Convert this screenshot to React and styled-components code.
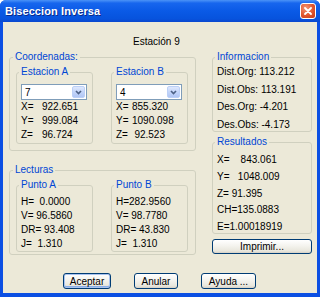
import React from "react";
import styled, { createGlobalStyle } from "styled-components";

const GlobalStyle = createGlobalStyle`
  html, body {
    margin: 0;
    padding: 0;
    background: #ffffff;
  }
  body {
    font-family: "Liberation Sans Narrow", "Liberation Sans", Arial, sans-serif;
    font-size: 10px;
    color: #000;
  }
`;

// Window frame
const Window = styled.div`
  width: 320px;
  height: 297px;
  box-sizing: border-box;
  display: flex;
  flex-direction: column;
  background: #0b4fe3;
  border-radius: 6px 6px 0 0;
  padding: 0 3px 4px;
  overflow: hidden;
`;

const TitleBar = styled.div`
  height: 22px;
  margin: 0 -3px;
  padding: 0 4px 0 5px;
  display: flex;
  align-items: center;
  justify-content: space-between;
  background: linear-gradient(
    180deg,
    #4b93f7 0%,
    #1766ee 14%,
    #0a5ae6 50%,
    #0753dd 85%,
    #0a47cf 100%
  );
`;

const Title = styled.span`
  color: #fff;
  font-weight: bold;
  font-size: 11px;
  text-shadow: 1px 1px 0 #0b2a8a;
  letter-spacing: 0.1px;
`;

const CloseButton = styled.div`
  width: 14px;
  height: 14px;
  border: 1px solid #fff;
  border-radius: 3px;
  background: radial-gradient(circle at 35% 30%, #f29676 0%, #e0552e 55%, #c23a17 100%);
  display: flex;
  align-items: center;
  justify-content: center;
`;

const Body = styled.div`
  flex: 1;
  background: #ece9d8;
  display: flex;
  flex-direction: column;
  padding: 14px 5px 0 6px;
`;

const Caption = styled.div`
  line-height: 12px;
  padding-left: 124px;
`;

const Main = styled.div`
  display: grid;
  grid-template-columns: 187px 100px;
  column-gap: 16px;
  margin-top: 3px;
  align-items: start;
`;

const Column = styled.div`
  display: flex;
  flex-direction: column;
  gap: ${(p) => p.gap}px;
`;

// Group boxes
const Group = styled.fieldset`
  margin: 0;
  padding: 0;
  min-width: 0;
  box-sizing: border-box;
  width: ${(p) => (p.width ? `${p.width}px` : "auto")};
  height: ${(p) => p.height}px;
  border: 1px solid #d0d0bf;
  border-radius: 3px;
`;

const Legend = styled.legend`
  margin-left: ${(p) => p.offset || 2}px;
  padding: 0 2px;
  color: #0046d5;
  line-height: 12px;
`;

const GroupRow = styled.div`
  display: flex;
  gap: 18px;
  padding: 3px 0 0 6px;
`;

const GroupContent = styled.div`
  display: flex;
  flex-direction: column;
  gap: ${(p) => p.gap || 0}px;
  padding: ${(p) => p.top}px 0 0 4px;
`;

const Line = styled.div`
  line-height: ${(p) => p.lh || 12}px;
  white-space: pre;
`;

const ValueRow = styled.div`
  display: flex;
  width: ${(p) => p.width}px;
  line-height: 14px;
  white-space: pre;
`;

const Key = styled.span`
  width: ${(p) => p.width}px;
  flex: none;
`;

const Value = styled.span`
  flex: 1;
  text-align: ${(p) => p.align};
`;

// Combo box
const Combo = styled.div`
  width: 66px;
  height: 16px;
  box-sizing: border-box;
  border: 1px solid #7f9db9;
  background: #fff;
  display: flex;
  align-items: center;
  justify-content: space-between;
  padding: 1px 1px 1px 3px;
`;

const ComboArrow = styled.span`
  width: 13px;
  height: 12px;
  box-sizing: border-box;
  border: 1px solid #bcd0f7;
  border-radius: 2px;
  background: linear-gradient(180deg, #dfe8fd 0%, #c3d5fa 50%, #b1c6f4 100%);
  display: flex;
  align-items: center;
  justify-content: center;
`;

// Buttons
const Button = styled.button`
  box-sizing: border-box;
  width: ${(p) => p.width}px;
  height: ${(p) => p.height || 16}px;
  margin-top: ${(p) => p.offsetTop || 0}px;
  padding: 0;
  font-family: inherit;
  font-size: 10px;
  color: #000;
  border: 1px solid #003c74;
  border-radius: 3px;
  background: linear-gradient(180deg, #ffffff 0%, #f4f3ee 45%, #e8e6dc 85%, #d6d0c5 100%);
  box-shadow: ${(p) =>
    p.primary ? "inset 0 0 0 1px #a9c3ef, inset 0 -1px 0 1px #8aaee8" : "none"};
`;

const ButtonRow = styled.div`
  display: flex;
  gap: 23px;
  padding-left: 54px;
  margin-top: 18px;
`;

const Chevron = () => (
  <svg width="7" height="5" viewBox="0 0 7 5">
    <path d="M1 1 L3.5 3.6 L6 1" fill="none" stroke="#4d6185" strokeWidth="1.6" />
  </svg>
);

const CloseIcon = () => (
  <svg width="8" height="8" viewBox="0 0 8 8">
    <path d="M1 1 L7 7 M7 1 L1 7" stroke="#fff" strokeWidth="1.8" strokeLinecap="round" />
  </svg>
);

const StationBox = ({ title, selected, rows, valueAlign, keyWidth, rowWidth }) => (
  <Group width={77} height={78}>
    <Legend>{title}</Legend>
    <GroupContent top={6}>
      <Combo>
        <span>{selected}</span>
        <ComboArrow>
          <Chevron />
        </ComboArrow>
      </Combo>
      {rows.map(([k, v]) => (
        <ValueRow key={k} width={rowWidth}>
          <Key width={keyWidth}>{k}</Key>
          <Value align={valueAlign}>{v}</Value>
        </ValueRow>
      ))}
    </GroupContent>
  </Group>
);

const PointBox = ({ title, lines }) => (
  <Group width={77} height={73}>
    <Legend>{title}</Legend>
    <GroupContent top={4}>
      {lines.map((l) => (
        <Line key={l} lh={14}>
          {l}
        </Line>
      ))}
    </GroupContent>
  </Group>
);

const App = () => {
  return (
    <>
      <GlobalStyle />
      <Window>
        <TitleBar>
          <Title>Biseccion Inversa</Title>
          <CloseButton>
            <CloseIcon />
          </CloseButton>
        </TitleBar>
        <Body>
          <Caption>Estación 9</Caption>
          <Main>
            <Column gap={13}>
              <Group height={100}>
                <Legend offset={3}>Coordenadas:</Legend>
                <GroupRow>
                  <StationBox
                    title="Estacion A"
                    selected="7"
                    keyWidth={21}
                    rowWidth={60}
                    valueAlign="left"
                    rows={[
                      ["X=", "922.651"],
                      ["Y=", "999.084"],
                      ["Z=", "96.724"],
                    ]}
                  />
                  <StationBox
                    title="Estacion B"
                    selected="4"
                    keyWidth={16}
                    rowWidth={49}
                    valueAlign="right"
                    rows={[
                      ["X=", "855.320"],
                      ["Y=", "1090.098"],
                      ["Z=", "92.523"],
                    ]}
                  />
                </GroupRow>
              </Group>
              <Group height={91}>
                <Legend offset={3}>Lecturas</Legend>
                <GroupRow>
                  <PointBox
                    title="Punto A"
                    lines={["H=  0.0000", "V= 96.5860", "DR= 93.408", "J=  1.310"]}
                  />
                  <PointBox
                    title="Punto B"
                    lines={["H=282.9560", "V= 98.7780", "DR= 43.830", "J=  1.310"]}
                  />
                </GroupRow>
              </Group>
            </Column>
            <Column gap={4}>
              <Group height={81}>
                <Legend>Informacion</Legend>
                <GroupContent top={3} gap={5.7}>
                  <Line>Dist.Org: 113.212</Line>
                  <Line>Dist.Obs: 113.191</Line>
                  <Line>Des.Org: -4.201</Line>
                  <Line>Des.Obs: -4.173</Line>
                </GroupContent>
              </Group>
              <Group height={98}>
                <Legend>Resultados</Legend>
                <GroupContent top={6} gap={4.75}>
                  <Line>{"X=    843.061"}</Line>
                  <Line>{"Y=   1048.009"}</Line>
                  <Line>{"Z= 91.395"}</Line>
                  <Line>CH=135.0883</Line>
                  <Line>E=1.00018919</Line>
                </GroupContent>
              </Group>
              <Button width={100} height={15} offsetTop={1}>
                Imprimir...
              </Button>
            </Column>
          </Main>
          <ButtonRow>
            <Button width={48} primary>
              Aceptar
            </Button>
            <Button width={44}>Anular</Button>
            <Button width={55}>Ayuda ...</Button>
          </ButtonRow>
        </Body>
      </Window>
    </>
  );
};

export default App;
